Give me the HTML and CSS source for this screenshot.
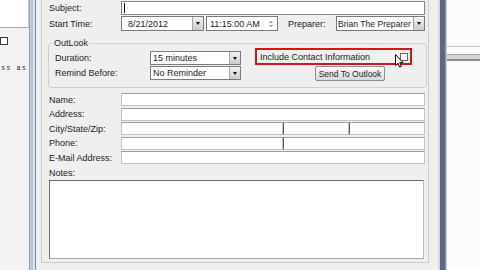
FILE: index.html
```html
<!DOCTYPE html>
<html lang="en">
<head>
    <meta charset="UTF-8">
    <meta name="viewport" content="width=device-width, initial-scale=1.0">
    <title>Appointment</title>
    <link rel="stylesheet" href="styles.css">
</head>
<body>

    <div class="screen">
        <!-- window behind, left -->
        <div class="backwin">
            <div class="backwin-top"></div>
            <span class="back-check"></span>
            <div class="back-text">ss as</div>
        </div>
        <div class="frame-left"></div>

        <div class="dialog">
            <div class="panel">
                <div class="row subject-row">
                    <span class="lbl">Subject:</span>
                    <div class="field subject"><span class="caret"></span></div>
                </div>

                <div class="row start-row">
                    <span class="lbl">Start Time:</span>
                    <div class="combo date"><span class="val">8/21/2012</span><span class="drop"></span></div>
                    <div class="combo time">
                        <span class="val">11:15:00 AM</span>
                        <span class="spin"><i class="up"></i><i class="down"></i></span>
                    </div>
                    <span class="prep-lbl">Preparer:</span>
                    <div class="combo preparer"><span class="val">Brian The Preparer</span><span class="drop"></span></div>
                </div>

                <!-- OutLook group -->
                <fieldset class="group">
                    <legend>OutLook</legend>
                    <div class="group-body">
                        <div class="g-left">
                            <div class="g-row">
                                <span class="g-lbl">Duration:</span>
                                <div class="combo short"><span class="val">15 minutes</span><span class="drop"></span></div>
                            </div>
                            <div class="g-row">
                                <span class="g-lbl">Remind Before:</span>
                                <div class="combo short"><span class="val">No Reminder</span><span class="drop"></span></div>
                            </div>
                        </div>
                        <div class="g-right">
                            <div class="highlight">
                                <span>Include Contact Information</span>
                                <span class="check"></span>
                                <svg class="cursor" width="9" height="14" viewBox="0 0 9 14">
                                    <path d="M0.5 0.5 V11.5 L3 9.2 L4.7 13.2 L6.4 12.4 L4.7 8.6 H8 Z" fill="#fff" stroke="#111" stroke-width="1" stroke-linejoin="round"/>
                                </svg>
                            </div>
                            <button class="btn">Send To Outlook</button>
                        </div>
                    </div>
                </fieldset>

                <!-- contact details -->
                <div class="contact">
                    <span class="lbl">Name:</span>
                    <div class="cfield"><span class="part w-full"></span></div>
                    <span class="lbl">Address:</span>
                    <div class="cfield"><span class="part w-full"></span></div>
                    <span class="lbl">City/State/Zip:</span>
                    <div class="cfield"><span class="part w-city"></span><span class="part w-state"></span><span class="part w-zip"></span></div>
                    <span class="lbl">Phone:</span>
                    <div class="cfield"><span class="part w-city"></span><span class="part w-ext"></span></div>
                    <span class="lbl">E-Mail Address:</span>
                    <div class="cfield"><span class="part w-full"></span></div>
                </div>

                <div class="notes-lbl">Notes:</div>
                <div class="notes"></div>
            </div>
        </div>

        <div class="frame-right"></div>

        <!-- window behind, right -->
        <div class="rightwin">
            <div class="rw-line"></div>
            <div class="rw-band"></div>
        </div>
    </div>

</body>
</html>
```

FILE: styles.css
```css
body {
    margin: 0;
    font-family: "Liberation Sans", Arial, sans-serif;
    font-size: 9px;
    color: #232323;
}

.screen {
    display: flex;
    width: 480px;
    height: 270px;
    overflow: hidden;
    background: #efefef;
}

/* left background window */
.backwin {
    width: 29px;
    flex: none;
    background: #f2f2f2;
    border-right: 1px solid #9c9c9c;
}

.backwin-top {
    height: 27px;
    background: #fff;
    border-bottom: 1px solid #a9a9a9;
    border-right: 1px solid #c9c9c9;
}

.back-check {
    display: block;
    width: 6px;
    height: 6px;
    margin: 9px 0 0 0;
    border: 1px solid #3a3a3a;
    background: #fff;
}

.back-text {
    margin-top: 19px;
    padding-left: 1px;
    font-family: "Liberation Mono", monospace;
    font-size: 7px;
    letter-spacing: 1px;
    color: #333;
}

.frame-left {
    width: 6px;
    flex: none;
    background: linear-gradient(to right, #c7d5e6 0 1px, #b2c3d8 1px 3px, #dde5ee 3px 5px, #7d8896 5px);
}

/* main dialog */
.dialog {
    width: 402px;
    flex: none;
    box-sizing: border-box;
    padding: 0 9px 0 5px;
    background: #efefef;
}

.panel {
    border: 1px solid #cdcdcd;
    border-top: 0;
    padding: 1px 1px 3px 6px;
}

.row {
    display: flex;
    align-items: center;
}

.lbl {
    width: 72px;
    padding-left: 1px;
    white-space: nowrap;
}

.subject-row {
    height: 14px;
    margin-bottom: 1px;
}

.field {
    box-sizing: border-box;
    height: 14px;
    background: #fff;
    border: 1px solid #8a8a8a;
}

.subject {
    width: 304px;
    display: flex;
    align-items: center;
}

.caret {
    width: 1px;
    height: 10px;
    margin-left: 2px;
    background: #111;
}

.start-row {
    height: 15px;
}

.combo {
    box-sizing: border-box;
    height: 15px;
    display: flex;
    align-items: center;
    background: #fff;
    border: 1px solid #7a7a7a;
}

.combo .val {
    flex: 1;
    overflow: hidden;
    white-space: nowrap;
}

.drop {
    width: 10px;
    align-self: stretch;
    display: flex;
    align-items: center;
    justify-content: center;
    background: linear-gradient(#f3f3f3, #cbcbcb);
    border-left: 1px solid #a6a6a6;
}

.drop::after {
    content: "";
    border-left: 2px solid transparent;
    border-right: 2px solid transparent;
    border-top: 3px solid #111;
}

.date {
    width: 83px;
    margin-right: 2px;
}

.date .val {
    padding-left: 6px;
}

.time {
    width: 72px;
}

.time .val {
    padding-left: 3px;
}

.spin {
    width: 10px;
    margin-right: 1px;
    align-self: stretch;
    display: flex;
    flex-direction: column;
    align-items: center;
    justify-content: center;
    gap: 2px;
}

.spin i {
    border-left: 2px solid transparent;
    border-right: 2px solid transparent;
}

.spin .up {
    border-bottom: 2px solid #8a8a8a;
}

.spin .down {
    border-top: 2px solid #8a8a8a;
}

.prep-lbl {
    width: 48px;
    margin-left: 10px;
}

.preparer {
    width: 89px;
}

.preparer .val {
    padding-left: 1px;
    font-size: 8.6px;
}

/* OutLook group box */
.group {
    margin: 8px 0 0;
    padding: 0 6px 6px;
    min-width: 0;
    border: 1px solid #cfcfcf;
    border-radius: 3px;
}

.group legend {
    margin-left: -2px;
    padding: 0 1px;
    line-height: 9px;
}

.group-body {
    display: flex;
}

.g-left {
    width: 186px;
    margin-top: 3px;
    display: flex;
    flex-direction: column;
    gap: 1px;
}

.g-row {
    display: flex;
    align-items: center;
    height: 14px;
}

.g-lbl {
    width: 95px;
}

.combo.short {
    width: 91px;
    height: 14px;
}

.combo.short .val {
    padding-left: 2px;
}

.g-right {
    margin-left: 14px;
    display: flex;
    flex-direction: column;
    align-items: flex-start;
}

.highlight {
    position: relative;
    box-sizing: border-box;
    width: 157px;
    height: 17px;
    padding: 0 2px 0 3px;
    display: flex;
    align-items: center;
    justify-content: space-between;
    border: 2px solid #d3161d;
}

.check {
    box-sizing: border-box;
    width: 8px;
    height: 8px;
    border: 1px solid #6a6a6a;
    background: #fff;
}

.cursor {
    position: absolute;
    left: 138px;
    top: 4px;
}

.btn {
    width: 70px;
    height: 15px;
    margin: 1px 0 0 60px;
    padding: 0;
    font-family: "Liberation Sans", Arial, sans-serif;
    font-size: 8.5px;
    color: #222;
    border: 1px solid #8e8e8e;
    border-radius: 2px;
    background: linear-gradient(#fbfbfb, #d9d9d9);
}

/* contact fields */
.contact {
    margin-top: 5px;
    display: grid;
    grid-template-columns: 73px 304px;
    row-gap: 1.5px;
    align-items: center;
}

.cfield {
    display: flex;
    height: 13px;
}

.part {
    box-sizing: border-box;
    background: #fff;
    border: 1px solid #c2c2c2;
    border-top-color: #9e9e9e;
}

.part + .part {
    border-left-color: #5c5c5c;
}

.w-full { width: 304px; }
.w-city { width: 162px; }
.w-state { width: 66px; }
.w-zip { width: 76px; }
.w-ext { width: 142px; }

.notes-lbl {
    margin: 4px 0 1px;
    padding-left: 1px;
    line-height: 11px;
}

.notes {
    box-sizing: border-box;
    width: 375px;
    height: 79px;
    margin-left: 1px;
    background: #fff;
    border: 1px solid;
    border-color: #6b6b6b #bcbcbc #a9a9a9 #6b6b6b;
}

.frame-right {
    width: 9px;
    flex: none;
    background: linear-gradient(to right, #d5dbe3 0 2px, #5d6a7a 2px 7px, #8d97a3 7px 8px, #c9cdd3 8px);
}

/* right background window */
.rightwin {
    width: 33px;
    flex: none;
    background: #fcfcfc;
}

.rw-line {
    margin-top: 46px;
    height: 1px;
    background: #c4c4c4;
}

.rw-band {
    margin-top: 7px;
    height: 7px;
    background: linear-gradient(#a5a5a5 0 1px, #d6d6d6 1px 5px, #8c8c8c 5px);
}
```
